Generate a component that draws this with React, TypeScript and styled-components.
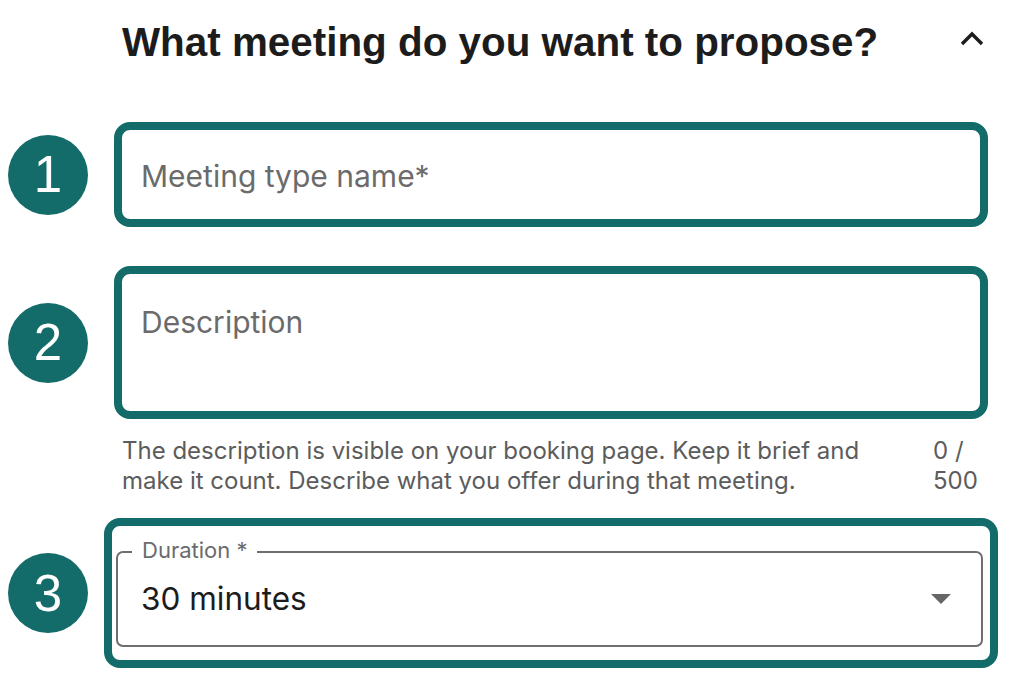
import React from "react";
import styled, { createGlobalStyle } from "styled-components";

const GlobalStyle = createGlobalStyle`
  html, body {
    margin: 0;
    padding: 0;
    background: #ffffff;
  }
  body {
    font-family: Inter, "Noto Sans", sans-serif;
  }
`;

const TEAL = "#136c6a";

export default function App() {
  return (
    <>
      <GlobalStyle />
      <Page>
        <Header>
          <Title>What meeting do you want to propose?</Title>
          <ChevronButton aria-label="Collapse">
            <svg width="24" height="16" viewBox="0 0 24 16">
              <path d="M2 13 L12 3 L22 13" fill="none" stroke="#1c1c1c" strokeWidth="3.4" />
            </svg>
          </ChevronButton>
        </Header>

        <Steps>
          <StepBadge>1</StepBadge>
          <Highlight $inset>
            <Placeholder>Meeting type name*</Placeholder>
          </Highlight>

          <StepBadge>2</StepBadge>
          <Highlight $inset $tall>
            <Placeholder>Description</Placeholder>
          </Highlight>

          <span />
          <HelperRow>
            <HelperText>
              The description is visible on your booking page. Keep it brief and make it count.
              Describe what you offer during that meeting.
            </HelperText>
            <Counter>0 / 500</Counter>
          </HelperRow>

          <StepBadge>3</StepBadge>
          <Highlight $padded>
            <SelectField>
              <FieldLegend>Duration *</FieldLegend>
              <SelectValue>30 minutes</SelectValue>
              <svg width="20" height="10" viewBox="0 0 20 10">
                <path d="M0 0 L20 0 L10 10 Z" fill="#666666" />
              </svg>
            </SelectField>
          </Highlight>
        </Steps>
      </Page>
    </>
  );
}

const Page = styled.div`
  width: 1012px;
  height: 682px;
  box-sizing: border-box;
  overflow: hidden;
`;

const Header = styled.div`
  display: flex;
  align-items: center;
  justify-content: space-between;
  padding: 17px 28px 0 122px;
  height: 50px;
`;

const Title = styled.h1`
  margin: 0;
  font-family: "Liberation Sans", Arial, sans-serif;
  font-weight: 700;
  font-size: 40.4px;
  color: #1c1c1c;
  letter-spacing: 0;
`;

const ChevronButton = styled.div`
  display: flex;
  width: 24px;
  height: 16px;
  margin-top: -6px;
`;

const Steps = styled.div`
  display: grid;
  grid-template-columns: 104px 894px;
  align-items: center;
  margin-top: 55px;
  row-gap: 39px;
`;

const StepBadge = styled.div`
  width: 80px;
  height: 80px;
  margin-left: 8px;
  border-radius: 50%;
  background: ${TEAL};
  color: #ffffff;
  display: flex;
  align-items: center;
  justify-content: center;
  font-family: "Liberation Sans", Arial, sans-serif;
  font-size: 51px;
  line-height: 1;
`;

const Highlight = styled.div<{ $inset?: boolean; $tall?: boolean; $padded?: boolean }>`
  box-sizing: border-box;
  border: 8px solid ${TEAL};
  border-radius: 16px;
  margin: 0 ${(p) => (p.$inset ? "10px" : "0")};
  height: ${(p) => (p.$tall ? "153px" : p.$padded ? "150px" : "105px")};
  padding: ${(p) => (p.$padded ? "25px 7px 13px 4px" : p.$tall ? "30px 19px" : "2px 19px 0")};
  display: flex;
  align-items: ${(p) => (p.$tall || p.$padded ? "flex-start" : "center")};
  background: #ffffff;
`;

const Placeholder = styled.span`
  font-size: 30px;
  color: #6b6b6b;
  line-height: 36px;
`;

const HelperRow = styled.div`
  display: flex;
  justify-content: space-between;
  padding: 0 21px 0 18px;
  margin-top: -22px;
  margin-bottom: -17px;
`;

const HelperText = styled.p`
  margin: 0;
  width: 750px;
  font-size: 24px;
  line-height: 30px;
  color: #5c5c5c;
`;

const Counter = styled.span`
  width: 44px;
  font-size: 24px;
  line-height: 30px;
  color: #5c5c5c;
`;

const SelectField = styled.div`
  position: relative;
  flex: 1;
  box-sizing: border-box;
  height: 96px;
  border: 2px solid #6e6e6e;
  border-radius: 7px;
  display: flex;
  align-items: center;
  justify-content: space-between;
  padding: 0 30px 0 23px;
`;

const FieldLegend = styled.span`
  position: absolute;
  top: -16px;
  left: 14px;
  padding: 0 10px;
  background: #ffffff;
  font-size: 22px;
  line-height: 26px;
  color: #6b6b6b;
`;

const SelectValue = styled.span`
  font-size: 31.5px;
  color: #1c1c1c;
  margin-top: -2px;
`;
